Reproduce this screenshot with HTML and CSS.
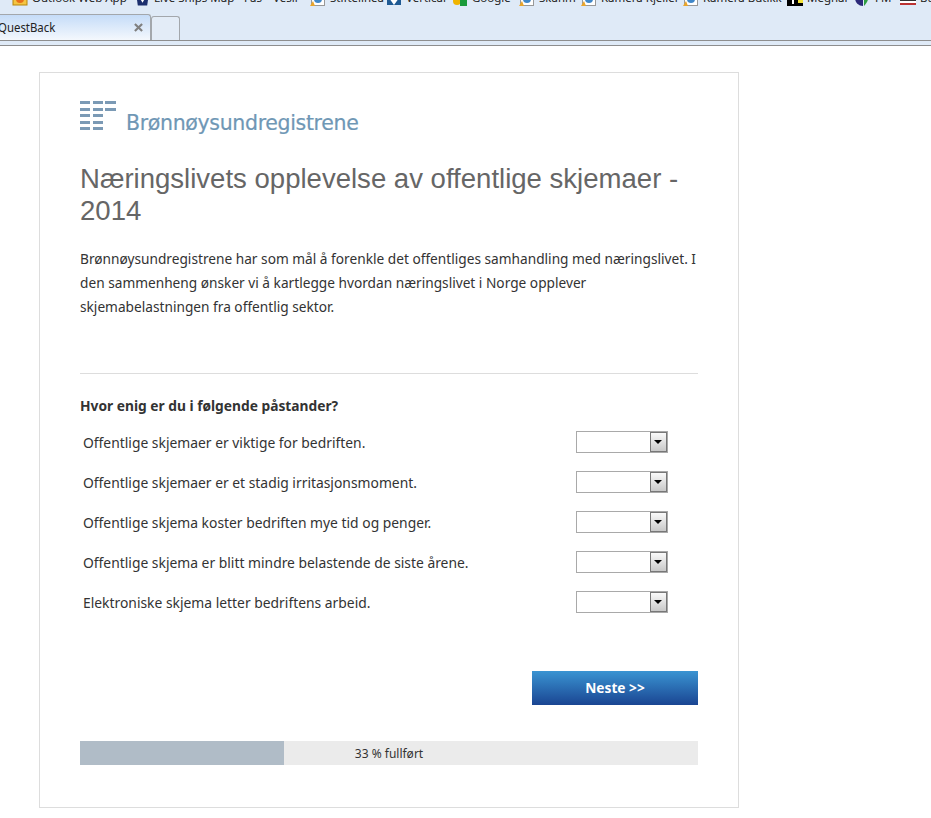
FILE: index.html
```html
<!DOCTYPE html>
<html lang="no">
<head>
<meta charset="utf-8">
<title>QuestBack</title>
<link rel="stylesheet" href="styles.css">
</head>
<body>
<header class="chrome">
  <nav class="bookmarks">
    <span class="bm bm-outlook"><svg class="ico" viewBox="0 0 16 16"><rect x="1" y="1" width="14" height="14" fill="#f5c542" stroke="#b8860b"/><circle cx="8" cy="9" r="4" fill="#e8701a"/></svg>Outlook Web App</span>
    <span class="bm bm-ships"><svg class="ico" viewBox="0 0 16 16"><path d="M1 2h14l-2 14H3z" fill="#1c2f6e"/><path d="M5 8l3 5 3-5" fill="#fff"/></svg>Live Ships Map</span>
    <span class="bm bm-fas">Fas</span>
    <span class="bm bm-vesir">Vesir</span>
    <span class="bm bm-stift"><svg class="ico" viewBox="0 0 16 16"><rect x="1.5" y="1.5" width="13" height="14" fill="#fff" stroke="#999"/><circle cx="8" cy="9" r="4" fill="#3f87c9"/><path d="M0 16l3-5 2 5z" fill="#e9a52c"/></svg>Stiftelinea</span>
    <span class="bm bm-vert"><svg class="ico" viewBox="0 0 16 16"><rect x="1" y="1" width="14" height="14" fill="#1f5a93"/><path d="M3 8l5 7 5-7z" fill="#fff"/></svg>Vertical</span>
    <span class="bm bm-google"><svg class="ico" viewBox="0 0 16 16"><circle cx="5" cy="11" r="4" fill="#f0b400"/><rect x="8" y="9" width="7" height="7" fill="#1a9a3a"/></svg>Google</span>
    <span class="bm bm-skanm"><svg class="ico" viewBox="0 0 16 16"><rect x="1.5" y="1.5" width="13" height="14" fill="#fff" stroke="#999"/><circle cx="8" cy="9" r="4" fill="#3f87c9"/><path d="M0 16l3-5 2 5z" fill="#e9a52c"/></svg>Skanm</span>
    <span class="bm bm-kj"><svg class="ico" viewBox="0 0 16 16"><rect x="1.5" y="1.5" width="13" height="14" fill="#fff" stroke="#999"/><circle cx="8" cy="9" r="4" fill="#3f87c9"/><path d="M0 16l3-5 2 5z" fill="#e9a52c"/></svg>Kamera Kjeller</span>
    <span class="bm bm-bu"><svg class="ico" viewBox="0 0 16 16"><rect x="1.5" y="1.5" width="13" height="14" fill="#fff" stroke="#999"/><circle cx="8" cy="9" r="4" fill="#3f87c9"/><path d="M0 16l3-5 2 5z" fill="#e9a52c"/></svg>Kamera Butikk</span>
    <span class="bm bm-me"><svg class="ico" viewBox="0 0 16 16"><rect x="0" y="0" width="16" height="16" fill="#000"/><rect x="5" y="10" width="2" height="4" fill="#fff"/><rect x="11" y="8" width="5" height="5" fill="#f3e23a"/></svg>Meghar</span>
    <span class="bm bm-fm"><svg class="ico" viewBox="0 0 16 16"><path d="M8 0A8 8 0 0 0 8 16z" fill="#2c2a7a"/><path d="M9 0c6 2 6 10 0 16z" fill="#2f9e44"/></svg>FM</span>
    <span class="bm bm-last"><svg class="ico" viewBox="0 0 16 16"><rect x="0" y="1" width="16" height="14" fill="#fff"/><rect x="0" y="9" width="16" height="2" fill="#333"/><rect x="0" y="13" width="16" height="2" fill="#b33"/></svg>Bu</span>
  </nav>
  <div class="tabs">
    <div class="tab"><span>QuestBack</span><svg class="close" viewBox="0 0 10 10"><path d="M1 1l8 8M9 1l-8 8" stroke="#808080" stroke-width="2.4" fill="none"/></svg></div>
    <div class="newtab"></div>
  </div>
</header>
<main class="card">
  <div class="logo">
    <svg class="logo-mark" viewBox="0 0 36 30" width="36" height="30">
      <g fill="#7b9ab5">
        <rect x="0" y="0" width="10" height="3"/><rect x="13" y="0" width="10" height="3"/><rect x="25" y="0" width="11" height="3"/>
        <rect x="0" y="7" width="10" height="3"/><rect x="13" y="7" width="10" height="3"/><rect x="25" y="7" width="11" height="3"/>
        <rect x="0" y="13" width="10" height="3"/><rect x="13" y="13" width="10" height="3"/>
        <rect x="0" y="20" width="10" height="3"/><rect x="13" y="20" width="10" height="3"/>
        <rect x="0" y="26" width="10" height="3"/><rect x="13" y="26" width="10" height="3"/>
      </g>
    </svg>
    <span class="logo-text">Brønnøysundregistrene</span>
  </div>
  <h1>Næringslivets opplevelse av offentlige skjemaer - 2014</h1>
  <p class="intro">Brønnøysundregistrene har som mål å forenkle det offentliges samhandling med næringslivet. I den sammenheng ønsker vi å kartlegge hvordan næringslivet i Norge opplever skjemabelastningen fra offentlig sektor.</p>
  <hr class="rule">
  <h2>Hvor enig er du i følgende påstander?</h2>
  <div class="rows">
    <div class="row"><span class="q">Offentlige skjemaer er viktige for bedriften.</span><span class="sel"><span class="arrow"></span></span></div>
    <div class="row"><span class="q">Offentlige skjemaer er et stadig irritasjonsmoment.</span><span class="sel"><span class="arrow"></span></span></div>
    <div class="row"><span class="q">Offentlige skjema koster bedriften mye tid og penger.</span><span class="sel"><span class="arrow"></span></span></div>
    <div class="row"><span class="q">Offentlige skjema er blitt mindre belastende de siste årene.</span><span class="sel"><span class="arrow"></span></span></div>
    <div class="row"><span class="q">Elektroniske skjema letter bedriftens arbeid.</span><span class="sel"><span class="arrow"></span></span></div>
  </div>
  <div class="actions"><button class="next">Neste &gt;&gt;</button></div>
  <div class="progress"><div class="fill"></div><span class="label">33 % fullført</span></div>
</main>
</body>
</html>
```
FILE: styles.css
```css
* { box-sizing: border-box; }
html, body { margin: 0; padding: 0; }
body { width: 931px; height: 818px; overflow: hidden; background: #fff; font-family: "Noto Sans", sans-serif; color: #333; }
.chrome { height: 46px; background: #dfeaf7; border-bottom: 1px solid #8e8e8e; overflow: hidden; }
.bookmarks { display: flex; height: 16px; margin-top: -10px; font: 11.5px/16px "Noto Sans", sans-serif; color: #222; white-space: nowrap; overflow: hidden; }
.bm { display: flex; align-items: center; gap: 4px; flex: none; }
.ico { width: 16px; height: 16px; flex: none; }
.bm-outlook { margin-left: 12px; width: 123px; }
.bm-ships { width: 109px; }
.bm-ships .ico { width: 15px; }
.bm-fas { width: 29px; }
.bm-vesir { width: 37px; }
.bm-stift { width: 76px; }
.bm-vert { width: 66px; }
.bm-google { width: 67px; }
.bm-skanm { width: 62px; }
.bm-kj { width: 102px; }
.bm-bu { width: 104px; }
.bm-me { width: 68px; }
.bm-fm { width: 45px; }
.tabs { display: flex; align-items: flex-end; height: 35px; border-bottom: 1px solid #8e8e8e; background: #dfeaf7; }
.tab { flex: none; width: 154px; height: 26px; display: flex; justify-content: space-between; align-items: center; padding: 0 7px 1px 0; margin-left: -3px; font-size: 12px; color: #222; background: linear-gradient(#c5dcf8, #f4f8fd); border: 1px solid #a3a7ac; border-bottom: 0; border-radius: 3px 3px 0 0; }
.tab > span { transform: scaleX(0.95); transform-origin: left; }
.close { width: 9px; height: 9px; display: block; }
.newtab { flex: none; width: 29px; height: 24px; border: 1px solid #a3a7ac; border-bottom: 0; border-radius: 3px 3px 0 0; background: #e3ecf7; }
.card { width: 700px; height: 736px; margin: 26px 0 0 39px; padding: 27px 40px 0; border: 1px solid #ddd; background: #fff; }
.logo { position: relative; height: 32px; padding-top: 1px; }
.logo-mark { display: block; }
.logo-text { position: absolute; left: 46px; top: 8px; font: 20.5px/30px "DejaVu Sans", sans-serif; letter-spacing: -0.34px; color: #6f97b5; white-space: nowrap; -webkit-text-stroke: 0.2px #6f97b5; }
h1 { margin: 31px 0 0; font: 400 27.55px/32px "Liberation Sans", sans-serif; color: #666; }
.intro { margin: 20px 0 0; font-size: 13.7px; line-height: 24px; color: #333; }
.rule { margin: 54px 0 0; border: 0; border-top: 1px solid #ddd; height: 0; }
h2 { margin: 22px 0 0; font-size: 13.77px; line-height: 20px; font-weight: 700; color: #333; }
.rows { margin-top: 6px; }
.row { display: flex; justify-content: space-between; align-items: center; height: 40px; padding: 0 30px 0 3px; font-size: 13.87px; }
.sel { position: relative; width: 92px; height: 22px; border: 1px solid #a9a9a9; background: #fff; }
.arrow { position: absolute; right: 0; top: 0; width: 17px; height: 20px; border: 1px solid #777; background: linear-gradient(#fafafa, #c8c8c8); }
.arrow::after { content: ""; position: absolute; left: 3px; top: 7px; border-left: 4px solid transparent; border-right: 4px solid transparent; border-top: 4px solid #000; }
.actions { display: flex; justify-content: flex-end; margin-top: 49px; }
.next { width: 166px; height: 34px; padding: 0 0 2px; border: 0; color: #fff; font: 700 13.7px "Noto Sans", sans-serif; background: linear-gradient(#3a94d2, #1a4592); }
.progress { position: relative; height: 24px; margin-top: 36px; background: #ebebeb; display: flex; justify-content: center; align-items: center; }
.fill { position: absolute; left: 0; top: 0; bottom: 0; width: 33%; background: #b0bcc7; }
.label { position: relative; font-size: 12px; color: #333; }
```
